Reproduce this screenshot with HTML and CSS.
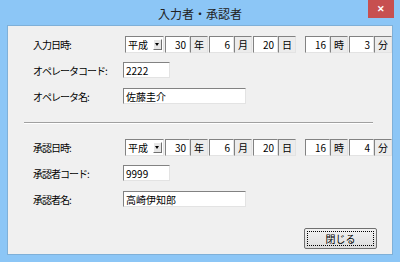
FILE: index.html
```html
<!DOCTYPE html>
<html lang="ja">
<head>
    <meta charset="UTF-8">
    <title>入力者・承認者</title>
    <link rel="stylesheet" href="styles.css">
</head>
<body>
    <div class="window">
        <div class="titlebar">
            <span></span>
            <span class="title">入力者・承認者</span>
            <div class="close">&#x2715;</div>
        </div>
        <div class="client">
            <!-- 入力者 -->
            <div class="row">
                <span class="label">入力日時:</span>
                <div class="datetime">
                    <div class="combo"><span>平成</span><span class="drop"></span></div>
                    <div class="num">30</div><div class="unit">年</div>
                    <div class="num">6</div><div class="unit">月</div>
                    <div class="num">20</div><div class="unit">日</div>
                    <div class="num time">16</div><div class="unit">時</div>
                    <div class="num">3</div><div class="unit">分</div>
                </div>
            </div>
            <div class="row">
                <span class="label">オペレータコード:</span>
                <div class="field short">2222</div>
            </div>
            <div class="row">
                <span class="label">オペレータ名:</span>
                <div class="field long">佐藤圭介</div>
            </div>

            <div class="sep"></div>

            <!-- 承認者 -->
            <div class="row">
                <span class="label">承認日時:</span>
                <div class="datetime">
                    <div class="combo"><span>平成</span><span class="drop"></span></div>
                    <div class="num">30</div><div class="unit">年</div>
                    <div class="num">6</div><div class="unit">月</div>
                    <div class="num">20</div><div class="unit">日</div>
                    <div class="num time">16</div><div class="unit">時</div>
                    <div class="num">4</div><div class="unit">分</div>
                </div>
            </div>
            <div class="row">
                <span class="label">承認者コード:</span>
                <div class="field short">9999</div>
            </div>
            <div class="row">
                <span class="label">承認者名:</span>
                <div class="field long">高崎伊知郎</div>
            </div>

            <div class="footer">
                <button type="button" class="close-btn"><span>閉じる</span></button>
            </div>
        </div>
    </div>
</body>
</html>
```

FILE: styles.css
```css
body {
    margin: 0;
    font-family: "Noto Sans CJK JP", "Noto Sans", sans-serif;
    font-size: 10px;
    color: #000000;
}
.window {
    width: 400px;
    height: 262px;
    box-sizing: border-box;
    background: #8cc6f6;
    padding: 0 7px 7px 7px;
    display: flex;
    flex-direction: column;
}
.titlebar {
    height: 25px;
    flex: none;
    display: grid;
    grid-template-columns: 1fr auto 1fr;
}
.title {
    font-size: 12px;
    line-height: 27px;
    color: #222222;
}
.close {
    justify-self: end;
    width: 26px;
    height: 18px;
    background: #c75050;
    color: #ffffff;
    font-size: 9px;
    font-weight: bold;
    line-height: 18px;
    text-align: center;
    margin-right: -1px;
}
.client {
    flex: 1;
    background: #f0f0f0;
    border: 1px solid #7fb0d8;
    overflow: hidden;
    padding-top: 5px;
}
.row {
    height: 26px;
    display: flex;
    align-items: center;
}
.label {
    width: 90px;
    padding-left: 25px;
    flex: none;
    letter-spacing: -1px;
}
.datetime {
    display: flex;
    height: 17px;
    margin-left: 2px;
}
.combo {
    width: 39px;
    box-sizing: border-box;
    background: #ffffff;
    border: 1px solid;
    border-color: #828282 #e3e3e3 #e3e3e3 #828282;
    display: flex;
    align-items: center;
    justify-content: space-between;
    padding-left: 2px;
    margin-right: 1px;
    line-height: 15px;
}
.drop {
    width: 9px;
    height: 11px;
    margin-right: 1px;
    background: #e6e6e6;
    border: 1px solid;
    border-color: #ffffff #707070 #707070 #ffffff;
    box-sizing: border-box;
    position: relative;
}
.drop::after {
    content: "";
    position: absolute;
    left: 1px;
    top: 3px;
    border-left: 2.5px solid transparent;
    border-right: 2.5px solid transparent;
    border-top: 3px solid #000000;
}
.num,
.unit,
.field {
    box-sizing: border-box;
    border: 1px solid;
    border-color: #828282 #e3e3e3 #e3e3e3 #828282;
    line-height: 15px;
}
.num {
    width: 25px;
    background: #ffffff;
    text-align: right;
    padding-right: 3px;
}
.num.time {
    margin-left: 8px;
}
.unit {
    width: 18px;
    background: #ececec;
    text-align: center;
    margin-right: 1px;
}
.field {
    background: #ffffff;
    height: 16px;
    padding-left: 2px;
}
.field.short {
    width: 47px;
}
.field.long {
    width: 123px;
}
.sep {
    margin: 13px 19px 10px 16px;
    border-top: 1px solid #a0a0a0;
    border-bottom: 1px solid #ffffff;
}
.footer {
    display: flex;
    justify-content: flex-end;
    padding-right: 15px;
    margin-top: 16px;
}
.close-btn {
    width: 73px;
    height: 21px;
    padding: 2px;
    border: 1px solid #707070;
    border-radius: 2px;
    background: linear-gradient(#f2f2f2, #dddddd);
    font-family: "Noto Sans CJK JP", sans-serif;
    font-size: 10px;
    color: #000000;
}
.close-btn span {
    display: block;
    height: 100%;
    box-sizing: border-box;
    border: 1px dotted #000000;
    line-height: 13px;
}
```
